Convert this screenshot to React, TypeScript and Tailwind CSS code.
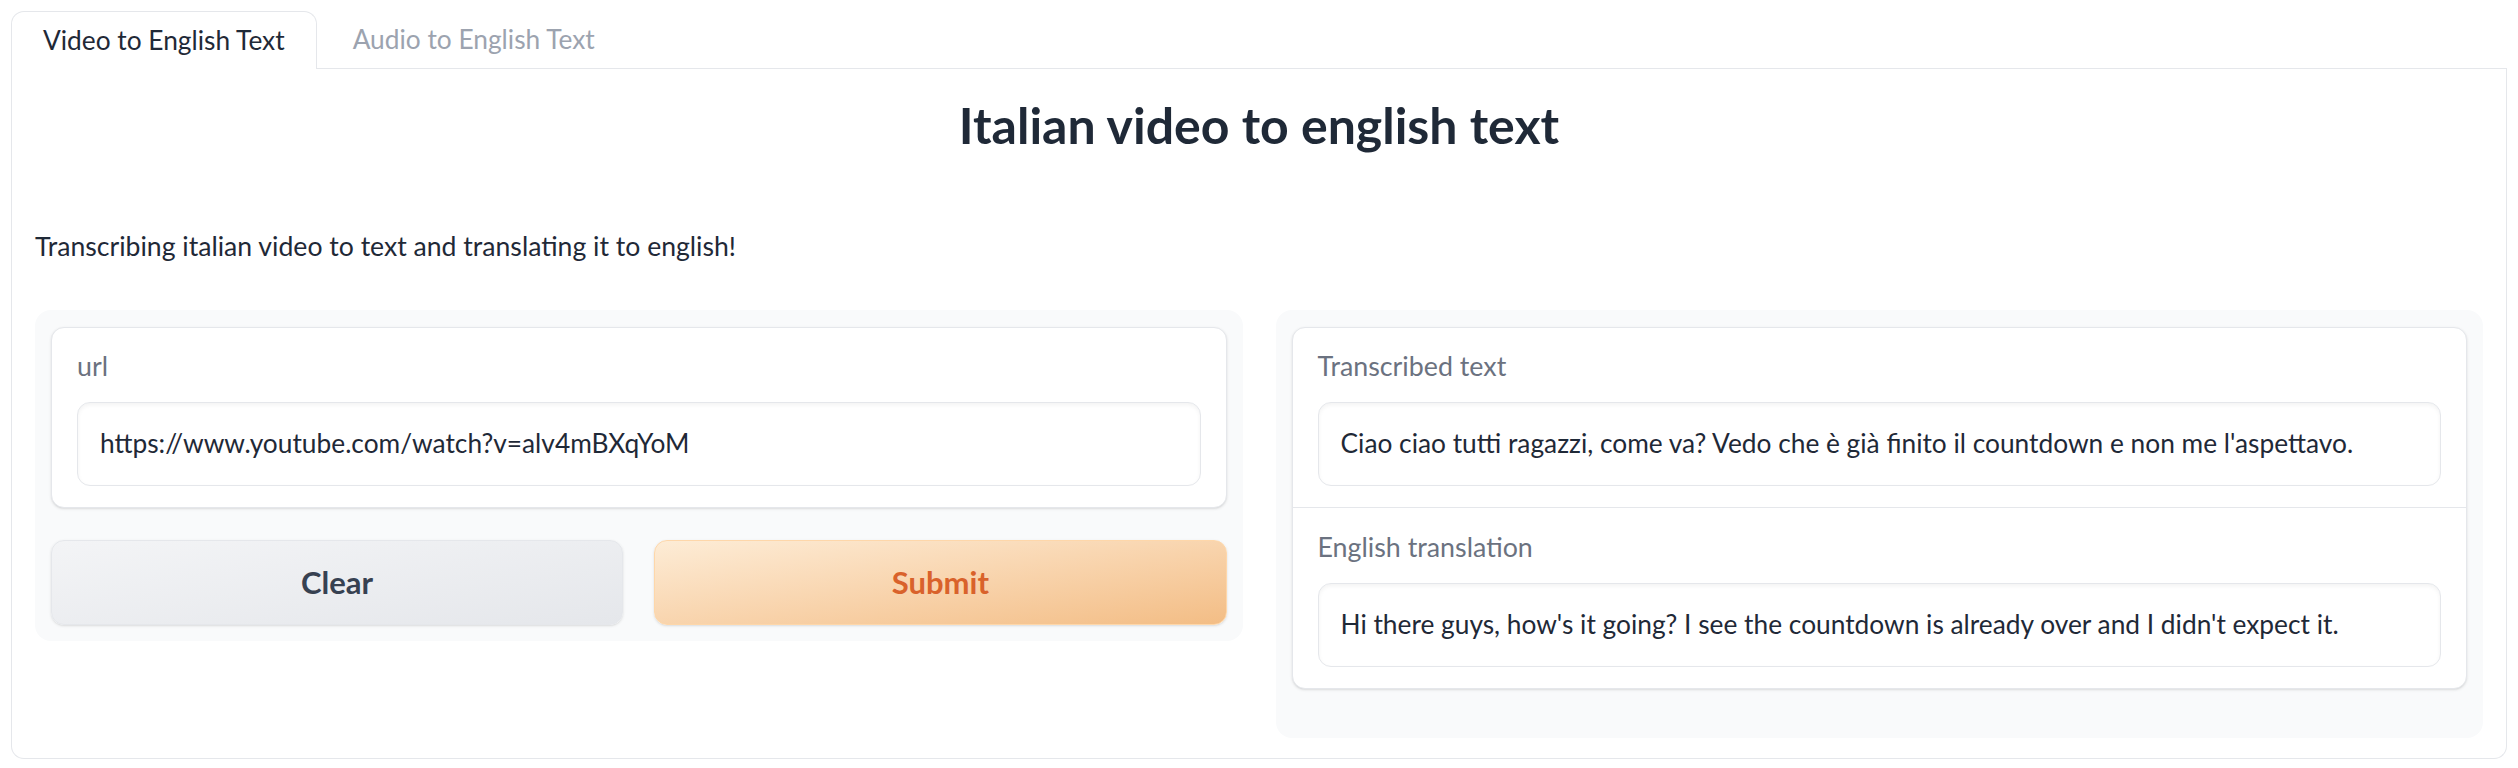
const tabs = ["Video to English Text", "Audio to English Text"];

function Field({ label, value }: { label: string; value: string }) {
  return (
    <div className="px-[25px] pt-[20px] pb-[21px]">
      <p className="mb-[18px] text-[26.8px] leading-[36px] text-[#6b7280]">{label}</p>
      <div className="flex h-[84px] items-center rounded-[13px] border border-[#e5e7eb] bg-white px-[22px] text-[26.3px] text-[#1f2937] shadow-[inset_0_2px_4px_rgba(0,0,0,0.05)]">
        {value}
      </div>
    </div>
  );
}

export default function App() {
  return (
    <div className="min-h-[768px] bg-white px-[11px] pt-[11px] font-['Lato',sans-serif] text-[#1f2937]">
      {/* Tabs */}
      <div className="flex border-b border-[#e5e7eb]">
        {tabs.map((t, i) =>
          i === 0 ? (
            <button key={t} className="-mb-px h-[58px] rounded-t-[13px] border border-b-0 border-[#e5e7eb] bg-white px-[31px] text-[26.3px] text-[#1f2937]">
              {t}
            </button>
          ) : (
            <button key={t} className="h-[57px] px-[36px] text-[26.3px] text-[#9ca3af]">
              {t}
            </button>
          )
        )}
      </div>

      {/* Tab panel */}
      <div className="h-[690px] rounded-b-[13px] border border-t-0 border-[#e5e7eb] px-[23px] pt-[28px]">
        <h1 className="text-center text-[50px] font-bold leading-[56px] text-[#1f2937]">Italian video to english text</h1>
        <p className="mt-[75px] text-[26.6px] leading-[36px] text-[#1f2937]">
          Transcribing italian video to text and translating it to english!
        </p>

        <div className="mt-[46px] flex items-start gap-[33px]">
          {/* Inputs */}
          <div className="flex-1 rounded-[16px] bg-[#f9fafb] p-[16px] pt-[17px]">
            <div className="rounded-[13px] border border-[#e5e7eb] bg-white shadow-sm">
              <Field label="url" value="https://www.youtube.com/watch?v=alv4mBXqYoM" />
            </div>
            <div className="mt-[32px] grid grid-cols-2 gap-[31px]">
              <button className="h-[85px] rounded-[13px] border border-[#e5e7eb] bg-gradient-to-br from-[#f3f4f6] to-[#e5e7eb] text-[31px] font-bold text-[#374151] shadow-sm">
                Clear
              </button>
              <button className="h-[85px] rounded-[13px] border border-[#fed7aa] bg-gradient-to-br from-[#fdecd6] to-[#f3bd85] text-[31px] font-bold text-[#d9622b] shadow-sm">
                Submit
              </button>
            </div>
          </div>

          {/* Outputs */}
          <div className="flex-1 rounded-[16px] bg-[#f9fafb] p-[16px] pt-[17px] pb-[49px]">
            <div className="divide-y divide-[#e5e7eb] rounded-[13px] border border-[#e5e7eb] bg-white shadow-sm">
              <Field
                label="Transcribed text"
                value="Ciao ciao tutti ragazzi, come va? Vedo che è già finito il countdown e non me l'aspettavo."
              />
              <div className="pt-px">
                <Field
                  label="English translation"
                  value="Hi there guys, how's it going? I see the countdown is already over and I didn't expect it."
                />
              </div>
            </div>
          </div>
        </div>
      </div>
    </div>
  );
}
